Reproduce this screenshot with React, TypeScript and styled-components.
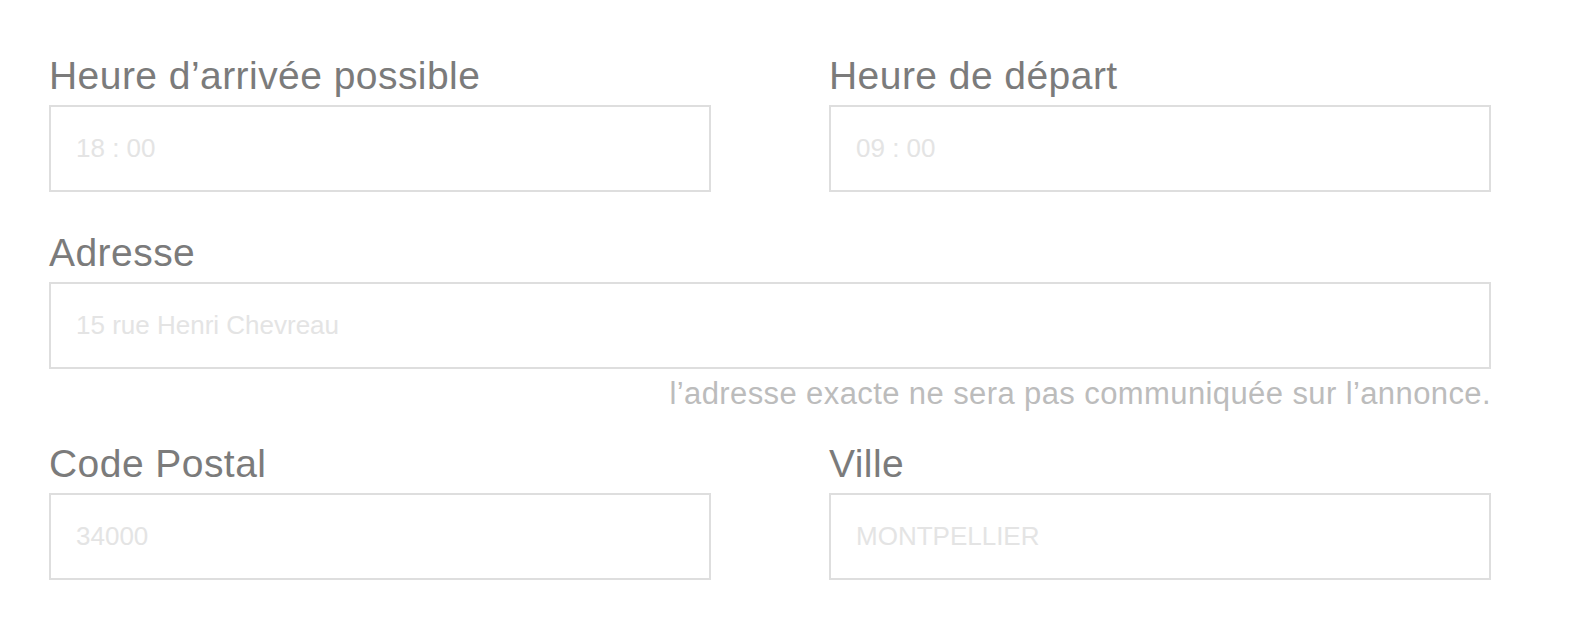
import React from 'react';
import styled, { createGlobalStyle } from 'styled-components';

const GlobalStyle = createGlobalStyle`
  body {
    margin: 0;
    background: #ffffff;
    font-family: "Liberation Sans", Arial, sans-serif;
  }
`;

const Form = styled.form`
  width: 1442px;
  padding: 47px 0 0 49px;
  display: flex;
  flex-direction: column;
`;

const Row = styled.div`
  display: grid;
  grid-template-columns: 662px 662px;
  column-gap: 118px;
`;

const Field = styled.div`
  display: flex;
  flex-direction: column;
`;

const Label = styled.label`
  font-size: 39px;
  line-height: 58px;
  color: #7b7b7b;
  letter-spacing: 0.45px;
`;

const Input = styled.input`
  box-sizing: border-box;
  width: 100%;
  height: 87px;
  border: 2px solid #dedede;
  padding: 0 25px;
  font-family: inherit;
  font-size: 26px;
  color: #555;
  background: #fff;
  outline: none;

  &::placeholder {
    color: #e4e4e4;
  }
`;

const Hint = styled.p`
  margin: 6px 0 0;
  text-align: right;
  font-size: 31px;
  line-height: 38px;
  color: #bcbcbc;
  letter-spacing: 0.4px;
`;

const Section = styled.div<{ $gap: number }>`
  margin-top: ${({ $gap }) => $gap}px;
`;

const App: React.FC = () => (
  <>
    <GlobalStyle />
    <Form>
      <Row>
        <Field>
          <Label>Heure d’arrivée possible</Label>
          <Input placeholder="18 : 00" />
        </Field>
        <Field>
          <Label>Heure de départ</Label>
          <Input placeholder="09 : 00" />
        </Field>
      </Row>
      <Section $gap={32}>
        <Field>
          <Label>Adresse</Label>
          <Input placeholder="15 rue Henri Chevreau" />
        </Field>
        <Hint>l’adresse exacte ne sera pas communiquée sur l’annonce.</Hint>
      </Section>
      <Section $gap={22}>
        <Row>
          <Field>
            <Label>Code Postal</Label>
            <Input placeholder="34000" />
          </Field>
          <Field>
            <Label>Ville</Label>
            <Input placeholder="MONTPELLIER" />
          </Field>
        </Row>
      </Section>
    </Form>
  </>
);

export default App;
